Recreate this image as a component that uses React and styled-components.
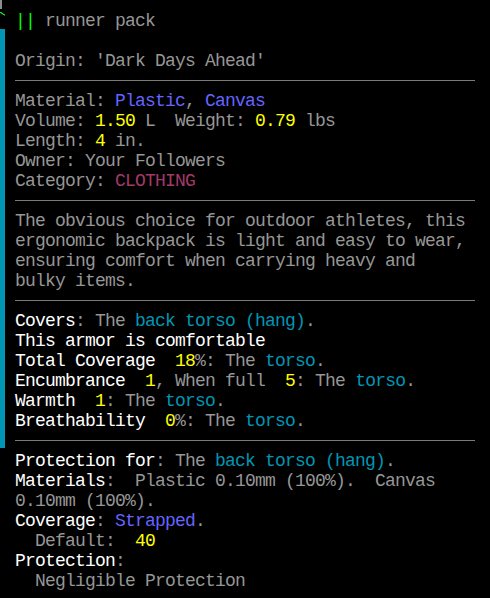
import React from 'react'
import styled, { createGlobalStyle } from 'styled-components'

const colors = {
    gray: '#969696',
    white: '#ffffff',
    blue: '#6464ff',
    cyan: '#0096b4',
    yellow: '#ffff00',
    green: '#00ff00',
    pink: '#a03a68',
    rule: '#7a7a7a',
}

const GlobalStyle = createGlobalStyle`
    html, body {
        margin: 0;
        padding: 0;
        background: #000;
    }
`

const Screen = styled.div`
    display: flex;
    width: 490px;
    height: 598px;
    background: #000;
    overflow: hidden;
    font-family: "Liberation Mono", "DejaVu Sans Mono", monospace;
    font-size: 18px;
    letter-spacing: -0.8px;
`

const Gutter = styled.div`
    display: flex;
    flex-direction: column;
    width: 15px;
    flex-shrink: 0;
`

const ScrollTop = styled.div`
    width: 2px;
    height: 9px;
    background: #8c8c8c;
`

const Tick = styled.svg`
    display: block;
    margin-top: 3px;
`

const ScrollBar = styled.div`
    width: 5px;
    height: 419px;
    margin-top: 13px;
    background: ${colors.cyan};
`

const Content = styled.div`
    display: flex;
    flex-direction: column;
    width: 460px;
    padding-top: 10px;
`

// each terminal row is 20px; glyphs sit 1px lower than plain centering
const Line = styled.div`
    height: 19px;
    padding-top: 1px;
    line-height: 20px;
    white-space: pre;
    overflow: visible;
    color: ${colors.gray};
`

const Rule = styled.div`
    height: 20px;
    display: flex;
    align-items: center;

    &::after {
        content: '';
        display: block;
        width: 100%;
        height: 1px;
        background: ${colors.rule};
    }
`

const C = styled.span`
    color: ${p => colors[p.$c] || colors.gray};
`

const App = () => {
    return (
        <Screen>
            <GlobalStyle />
            <Gutter>
                <ScrollTop />
                <Tick width="5" height="4" viewBox="0 0 5 4">
                    <path d="M0 0.5h1.5v1h1.5v1h1.5v1" stroke={colors.green} strokeWidth="1" fill="none" />
                </Tick>
                <ScrollBar />
            </Gutter>
            <Content>
                <Line><C $c="green">||</C> runner pack</Line>
                <Line />
                <Line>Origin: 'Dark Days Ahead'</Line>
                <Rule />
                <Line>Material: <C $c="blue">Plastic</C>, <C $c="blue">Canvas</C></Line>
                <Line>Volume: <C $c="yellow">1.50</C> L  Weight: <C $c="yellow">0.79</C> lbs</Line>
                <Line>Length: <C $c="yellow">4</C> in.</Line>
                <Line>Owner: Your Followers</Line>
                <Line>Category: <C $c="pink">CLOTHING</C></Line>
                <Rule />
                <Line>The obvious choice for outdoor athletes, this</Line>
                <Line>ergonomic backpack is light and easy to wear,</Line>
                <Line>ensuring comfort when carrying heavy and</Line>
                <Line>bulky items.</Line>
                <Rule />
                <Line><C $c="white">Covers</C>: The <C $c="cyan">back torso (hang)</C>.</Line>
                <Line><C $c="white">This armor is comfortable</C></Line>
                <Line><C $c="white">Total Coverage</C>  <C $c="yellow">18</C>%: The <C $c="cyan">torso</C>.</Line>
                <Line><C $c="white">Encumbrance</C>  <C $c="yellow">1</C>, When full  <C $c="yellow">5</C>: The <C $c="cyan">torso</C>.</Line>
                <Line><C $c="white">Warmth</C>  <C $c="yellow">1</C>: The <C $c="cyan">torso</C>.</Line>
                <Line><C $c="white">Breathability</C>  <C $c="yellow">0</C>%: The <C $c="cyan">torso</C>.</Line>
                <Rule />
                <Line><C $c="white">Protection for</C>: The <C $c="cyan">back torso (hang)</C>.</Line>
                <Line><C $c="white">Materials</C>:  Plastic 0.10mm (100%).  Canvas</Line>
                <Line>0.10mm (100%).</Line>
                <Line><C $c="white">Coverage</C>: <C $c="blue">Strapped</C>.</Line>
                <Line>  Default:  <C $c="yellow">40</C></Line>
                <Line><C $c="white">Protection</C>:</Line>
                <Line>  Negligible Protection</Line>
            </Content>
        </Screen>
    )
}

export default App
